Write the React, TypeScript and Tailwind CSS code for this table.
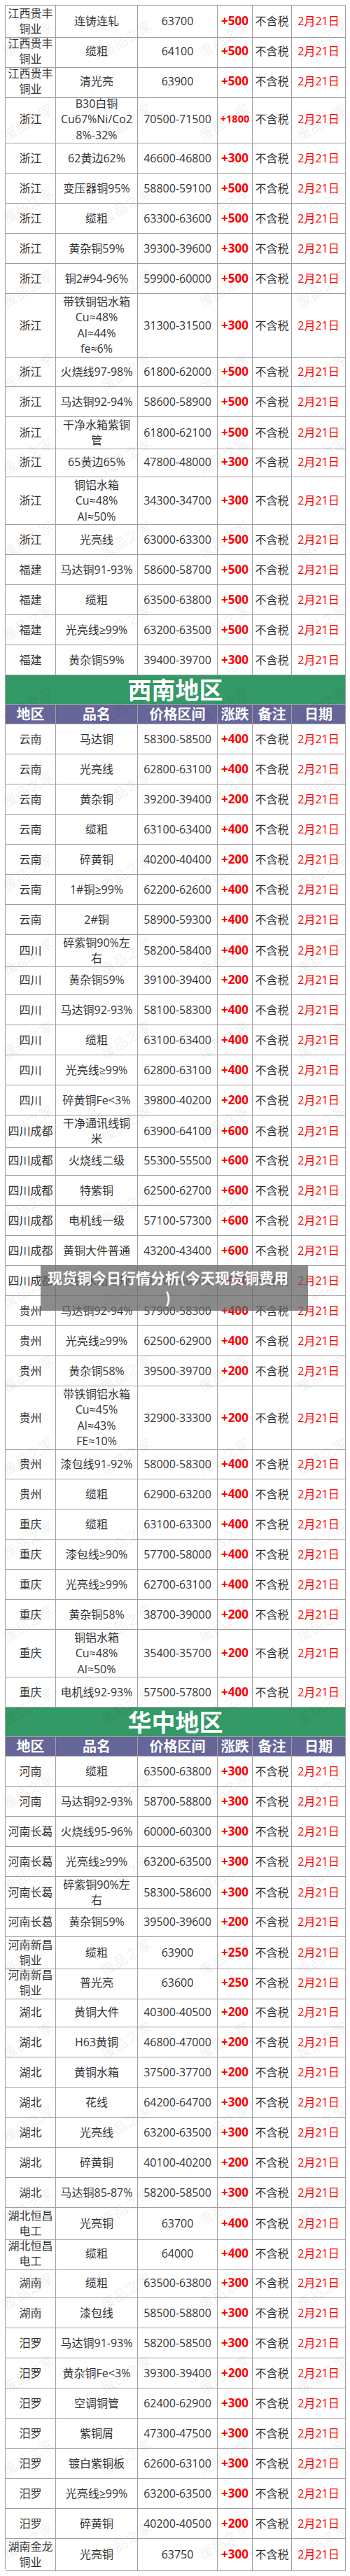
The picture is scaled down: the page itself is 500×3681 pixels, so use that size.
import React from "react";

type Item = [string, string, string, string];

const east: Item[] = [
  ["江西贵丰\n铜业", "连铸连轧", "63700", "+500"],
  ["江西贵丰\n铜业", "缆粗", "64100", "+500"],
  ["江西贵丰\n铜业", "清光亮", "63900", "+500"],
  ["浙江", "B30白铜\nCu67%Ni/Co2\n8%-32%", "70500-71500", "+1800"],
  ["浙江", "62黄边62%", "46600-46800", "+300"],
  ["浙江", "变压器铜95%", "58800-59100", "+500"],
  ["浙江", "缆粗", "63300-63600", "+500"],
  ["浙江", "黄杂铜59%", "39300-39600", "+300"],
  ["浙江", "铜2#94-96%", "59900-60000", "+500"],
  ["浙江", "带铁铜铝水箱\nCu≈48%\nAl≈44%\nfe≈6%", "31300-31500", "+300"],
  ["浙江", "火烧线97-98%", "61800-62000", "+500"],
  ["浙江", "马达铜92-94%", "58600-58900", "+500"],
  ["浙江", "干净水箱紫铜\n管", "61800-62100", "+500"],
  ["浙江", "65黄边65%", "47800-48000", "+300"],
  ["浙江", "铜铝水箱\nCu≈48%\nAl≈50%", "34300-34700", "+300"],
  ["浙江", "光亮线", "63000-63300", "+500"],
  ["福建", "马达铜91-93%", "58600-58700", "+500"],
  ["福建", "缆粗", "63500-63800", "+500"],
  ["福建", "光亮线≥99%", "63200-63500", "+500"],
  ["福建", "黄杂铜59%", "39400-39700", "+300"],
];

const southwest: Item[] = [
  ["云南", "马达铜", "58300-58500", "+400"],
  ["云南", "光亮线", "62800-63100", "+400"],
  ["云南", "黄杂铜", "39200-39400", "+200"],
  ["云南", "缆粗", "63100-63400", "+400"],
  ["云南", "碎黄铜", "40200-40400", "+200"],
  ["云南", "1#铜≥99%", "62200-62600", "+400"],
  ["云南", "2#铜", "58900-59300", "+400"],
  ["四川", "碎紫铜90%左\n右", "58200-58400", "+400"],
  ["四川", "黄杂铜59%", "39100-39400", "+200"],
  ["四川", "马达铜92-93%", "58100-58300", "+400"],
  ["四川", "缆粗", "63100-63400", "+400"],
  ["四川", "光亮线≥99%", "62800-63100", "+400"],
  ["四川", "碎黄铜Fe<3%", "39800-40200", "+200"],
  ["四川成都", "干净通讯线铜\n米", "63900-64100", "+600"],
  ["四川成都", "火烧线二级", "55300-55500", "+600"],
  ["四川成都", "特紫铜", "62500-62700", "+600"],
  ["四川成都", "电机线一级", "57100-57300", "+600"],
  ["四川成都", "黄铜大件普通", "43200-43400", "+600"],
  ["四川成都", "黄铜水箱常规", "40300-40500", "+600"],
  ["贵州", "马达铜92-94%", "57900-58300", "+400"],
  ["贵州", "光亮线≥99%", "62500-62900", "+400"],
  ["贵州", "黄杂铜58%", "39500-39700", "+200"],
  ["贵州", "带铁铜铝水箱\nCu≈45%\nAl≈43%\nFE≈10%", "32900-33300", "+200"],
  ["贵州", "漆包线91-92%", "58000-58300", "+400"],
  ["贵州", "缆粗", "62900-63200", "+400"],
  ["重庆", "缆粗", "63100-63300", "+400"],
  ["重庆", "漆包线≥90%", "57700-58000", "+400"],
  ["重庆", "光亮线≥99%", "62700-63100", "+400"],
  ["重庆", "黄杂铜58%", "38700-39000", "+200"],
  ["重庆", "铜铝水箱\nCu≈48%\nAl≈50%", "35400-35700", "+200"],
  ["重庆", "电机线92-93%", "57500-57800", "+400"],
];

const central: Item[] = [
  ["河南", "缆粗", "63500-63800", "+300"],
  ["河南", "马达铜92-93%", "58700-58800", "+300"],
  ["河南长葛", "火烧线95-96%", "60000-60300", "+300"],
  ["河南长葛", "光亮线≥99%", "63200-63500", "+300"],
  ["河南长葛", "碎紫铜90%左\n右", "58300-58600", "+300"],
  ["河南长葛", "黄杂铜59%", "39500-39600", "+200"],
  ["河南新昌\n铜业", "缆粗", "63900", "+250"],
  ["河南新昌\n铜业", "普光亮", "63600", "+250"],
  ["湖北", "黄铜大件", "40300-40500", "+200"],
  ["湖北", "H63黄铜", "46800-47000", "+200"],
  ["湖北", "黄铜水箱", "37500-37700", "+200"],
  ["湖北", "花线", "64200-64700", "+300"],
  ["湖北", "光亮线", "63200-63500", "+300"],
  ["湖北", "碎黄铜", "40100-40200", "+200"],
  ["湖北", "马达铜85-87%", "58200-58500", "+300"],
  ["湖北恒昌\n电工", "光亮铜", "63700", "+400"],
  ["湖北恒昌\n电工", "缆粗", "64000", "+400"],
  ["湖南", "缆粗", "63500-63800", "+300"],
  ["湖南", "漆包线", "58500-58800", "+300"],
  ["汨罗", "马达铜91-93%", "58200-58500", "+300"],
  ["汨罗", "黄杂铜Fe<3%", "39300-39400", "+200"],
  ["汨罗", "空调铜管", "62400-62900", "+300"],
  ["汨罗", "紫铜屑", "47300-47500", "+300"],
  ["汨罗", "镀白紫铜板", "62600-63100", "+300"],
  ["汨罗", "光亮线≥99%", "63200-63500", "+300"],
  ["汨罗", "碎黄铜", "40200-40500", "+200"],
  ["湖南金龙\n铜业", "光亮铜", "63750", "+300"],
];

const cols = "grid grid-cols-[72px_117px_114px_50px_56px_77px]";
const cell =
  "flex items-center justify-center text-center whitespace-pre border-r border-b border-[#a0a0a0]";

function PriceRow({ item }: { item: Item }) {
  const [region, name, price, change] = item;
  const lines = Math.max(region.split("\n").length, name.split("\n").length);
  const height = lines >= 4 ? "h-[90px]" : lines === 3 ? "h-[68px]" : "h-[43px]";

  return (
    <div className={`${cols} ${height} text-[16px] leading-[22.4px] text-[#333]`}>
      <div className={cell}>{region}</div>
      <div className={cell}>{name}</div>
      <div className={cell}>{price}</div>
      <div
        className={`${cell} font-bold text-[#ff0000] ${change.length > 4 ? "text-[14.5px]" : "text-[17px]"}`}
      >
        {change}
      </div>
      <div className={cell}>不含税</div>
      <div className={`${cell} text-[#ff0000]`}>2月21日</div>
    </div>
  );
}

function SectionHead({ title }: { title: string }) {
  return (
    <>
      <div className="flex h-[42px] items-center justify-center border-r border-b border-[#a0a0a0] bg-[#339966] text-[34px] leading-none font-bold text-white">
        {title}
      </div>
      <div className={`${cols} h-[28px] bg-[#666699] text-[20px] leading-none font-bold text-white`}>
        {["地区", "品名", "价格区间", "涨跌", "备注", "日期"].map((h) => (
          <div key={h} className={cell}>
            {h}
          </div>
        ))}
      </div>
    </>
  );
}

export default function App() {
  const marks = Array.from({ length: 31 * 4 });

  return (
    <div className="relative w-[500px] overflow-hidden bg-white pt-[7px] pb-[8px] pl-[7px] [font-family:'Open_Sans','Noto_Sans_CJK_SC',sans-serif]">
      <div className="w-[487px] border-t border-l border-[#a0a0a0]">
        {east.map((r, i) => (
          <PriceRow key={`e${i}`} item={r} />
        ))}
        <SectionHead title="西南地区" />
        {southwest.map((r, i) => (
          <PriceRow key={`s${i}`} item={r} />
        ))}
        <SectionHead title="华中地区" />
        {central.map((r, i) => (
          <PriceRow key={`c${i}`} item={r} />
        ))}
      </div>

      {/* watermark */}
      <div className="pointer-events-none absolute top-[-5px] bottom-0 left-[-30px] grid w-[560px] auto-rows-[119.2px] grid-cols-4">
        {marks.map((_, i) => (
          <div key={i} className="flex items-center justify-center">
            <span className="rotate-[-32deg] text-[20px] text-black/[0.07] [font-family:'Noto_Sans_CJK_SC',sans-serif]">
              废品之家
            </span>
          </div>
        ))}
      </div>

      {/* caption overlay */}
      <div className="absolute top-[1808px] left-[58px] h-[65px] w-[382px] bg-[rgba(100,100,100,0.75)] pt-[3px] pr-[28px] pl-[10px] text-center text-[21px] leading-[29px] font-bold whitespace-pre-line text-white [font-family:'Noto_Sans_CJK_SC',sans-serif]">
        {"现货铜今日行情分析(今天现货铜费用\n)"}
      </div>
    </div>
  );
}
